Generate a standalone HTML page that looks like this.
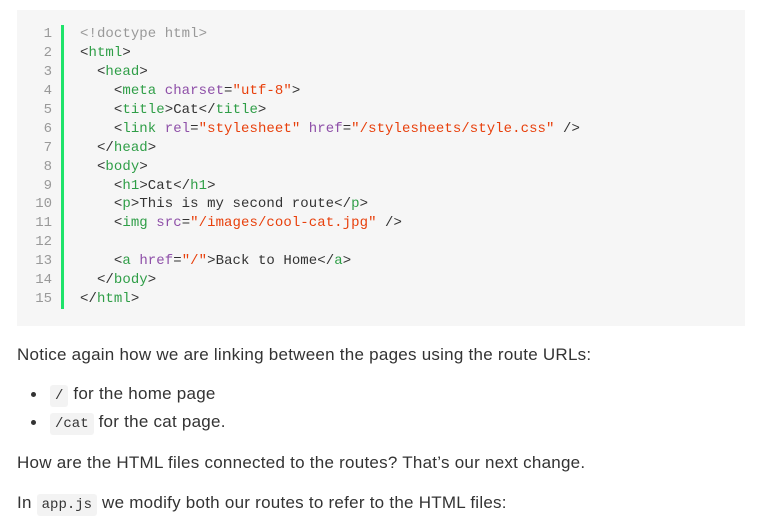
<!DOCTYPE html>
<html><head><meta charset="utf-8"><style>
body{margin:0;background:#fff;width:758px;height:530px;overflow:hidden;font-family:"Liberation Sans",sans-serif;color:#333}
.code{position:absolute;left:17px;top:10px;width:728px;height:316px;background:#f6f6f6}
.nums{position:absolute;left:17px;top:25px;width:35px;text-align:right;font:14px/18.93px "Liberation Mono",monospace;color:#999}
.bar{position:absolute;left:61px;top:25px;width:3px;height:284px;background:#1ee36a}
pre{position:absolute;left:80px;top:25px;margin:0;font:14px/18.93px "Liberation Mono",monospace;color:#333;letter-spacing:0.07px}
.t{color:#2f9e47}.a{color:#8e4fa8}.s{color:#e8400c}.c{color:#999}
p{position:absolute;left:17px;margin:0;font-size:17px;letter-spacing:0.25px;white-space:nowrap}
code{font:14px "Liberation Mono",monospace;letter-spacing:0;background:#f3f3f3;padding:3px 5px;border-radius:3px}
.dot{position:absolute;left:31px;width:5px;height:5px;border-radius:50%;background:#333}
</style></head><body>
<div class="code"></div>
<div class="nums">1<br>2<br>3<br>4<br>5<br>6<br>7<br>8<br>9<br>10<br>11<br>12<br>13<br>14<br>15</div>
<div class="bar"></div>
<pre><span class="c">&lt;!doctype html&gt;</span>
&lt;<span class="t">html</span>&gt;
  &lt;<span class="t">head</span>&gt;
    &lt;<span class="t">meta</span> <span class="a">charset</span>=<span class="s">"utf-8"</span>&gt;
    &lt;<span class="t">title</span>&gt;Cat&lt;/<span class="t">title</span>&gt;
    &lt;<span class="t">link</span> <span class="a">rel</span>=<span class="s">"stylesheet"</span> <span class="a">href</span>=<span class="s">"/stylesheets/style.css"</span> /&gt;
  &lt;/<span class="t">head</span>&gt;
  &lt;<span class="t">body</span>&gt;
    &lt;<span class="t">h1</span>&gt;Cat&lt;/<span class="t">h1</span>&gt;
    &lt;<span class="t">p</span>&gt;This is my second route&lt;/<span class="t">p</span>&gt;
    &lt;<span class="t">img</span> <span class="a">src</span>=<span class="s">"/images/cool-cat.jpg"</span> /&gt;

    &lt;<span class="t">a</span> <span class="a">href</span>=<span class="s">"/"</span>&gt;Back to Home&lt;/<span class="t">a</span>&gt;
  &lt;/<span class="t">body</span>&gt;
&lt;/<span class="t">html</span>&gt;</pre>
<p style="top:345px">Notice again how we are linking between the pages using the route URLs:</p>
<div class="dot" style="top:392px"></div>
<p style="left:50px;top:384px"><code>/</code> for the home page</p>
<div class="dot" style="top:420px"></div>
<p style="left:50px;top:412px"><code>/cat</code> for the cat page.</p>
<p style="top:453px">How are the HTML files connected to the routes? That’s our next change.</p>
<p style="top:493px">In <code>app.js</code> we modify both our routes to refer to the HTML files:</p>
</body></html>
